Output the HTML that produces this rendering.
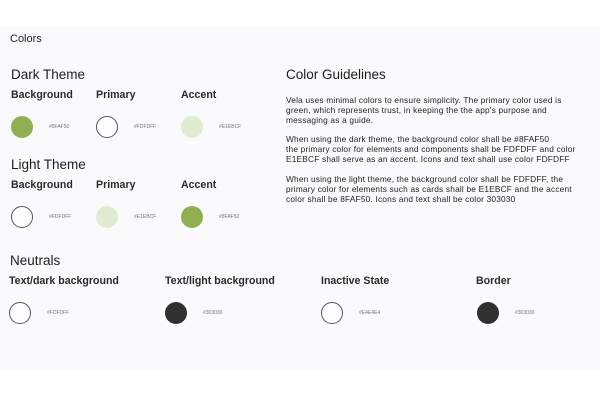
<!DOCTYPE html>
<html><head><style>
*{margin:0;padding:0;box-sizing:border-box}
body{width:600px;height:400px;background:#fff;font-family:"Liberation Sans",sans-serif;color:#222;position:relative;overflow:hidden}
.panel{position:absolute;left:0;top:27px;width:600px;height:343px;background:#fafafc}
.a{position:absolute;white-space:nowrap}
.h{font-size:13.5px;color:#1e1e1e}
.l{font-size:10.6px;font-weight:bold;color:#2a2a2a}
.c{position:absolute;width:22px;height:22px;border-radius:50%}
.hx{position:absolute;font-size:5px;color:#777}
.p{position:absolute;left:286px;font-size:8.3px;letter-spacing:0.2px;line-height:9.9px;color:#222;width:314px;white-space:nowrap}
</style></head><body>
<div class="panel"></div>
<div class="a" style="left:10px;top:33px;font-size:11px">Colors</div>

<div class="a h" style="left:11px;top:67px">Dark Theme</div>
<div class="a l" style="left:11px;top:89px">Background</div>
<div class="a l" style="left:96px;top:89px">Primary</div>
<div class="a l" style="left:181px;top:89px">Accent</div>
<div class="c" style="left:11px;top:116px;background:#8faf50"></div>
<div class="hx" style="left:49px;top:124px">#8FAF50</div>
<div class="c" style="left:96px;top:116px;background:#fdfdff;border:1px solid #555"></div>
<div class="hx" style="left:134px;top:124px">#FDFDFF</div>
<div class="c" style="left:181px;top:116px;background:#e1ebcf"></div>
<div class="hx" style="left:219px;top:124px">#E1EBCF</div>

<div class="a h" style="left:11px;top:157px">Light Theme</div>
<div class="a l" style="left:11px;top:179px">Background</div>
<div class="a l" style="left:96px;top:179px">Primary</div>
<div class="a l" style="left:181px;top:179px">Accent</div>
<div class="c" style="left:11px;top:206px;background:#fdfdff;border:1px solid #555"></div>
<div class="hx" style="left:49px;top:214px">#FDFDFF</div>
<div class="c" style="left:96px;top:206px;background:#e1ebcf"></div>
<div class="hx" style="left:134px;top:214px">#E1EBCF</div>
<div class="c" style="left:181px;top:206px;background:#8faf50"></div>
<div class="hx" style="left:219px;top:214px">#8FAF50</div>

<div class="a h" style="left:10px;top:253px">Neutrals</div>
<div class="a l" style="left:9px;top:275px">Text/dark background</div>
<div class="a l" style="left:165px;top:275px">Text/light background</div>
<div class="a l" style="left:321px;top:275px">Inactive State</div>
<div class="a l" style="left:476px;top:275px">Border</div>
<div class="c" style="left:9px;top:302px;background:#fdfdff;border:1px solid #555"></div>
<div class="hx" style="left:47px;top:310px">#FDFDFF</div>
<div class="c" style="left:165px;top:302px;background:#303030"></div>
<div class="hx" style="left:203px;top:310px">#303030</div>
<div class="c" style="left:321px;top:302px;background:#fdfdff;border:1px solid #555"></div>
<div class="hx" style="left:359px;top:310px">#E4E4E4</div>
<div class="c" style="left:477px;top:302px;background:#303030"></div>
<div class="hx" style="left:515px;top:310px">#303030</div>

<div class="a h" style="left:286px;top:67px">Color Guidelines</div>
<div class="p" style="top:96px">Vela uses minimal colors to ensure simplicity. The primary color used is<br>green, which represents trust, in keeping the the app's purpose and<br>messaging as a guide.</div>
<div class="p" style="top:135px">When using the dark theme, the background color shall be #8FAF50<br>the primary color for elements and components shall be FDFDFF and color<br>E1EBCF shall serve as an accent. Icons and text shall use color FDFDFF</div>
<div class="p" style="top:175px">When using the light theme, the background color shall be FDFDFF, the<br>primary color for elements such as cards shall be E1EBCF and the accent<br>color shall be 8FAF50. Icons and text shall be color 303030</div>
</body></html>
